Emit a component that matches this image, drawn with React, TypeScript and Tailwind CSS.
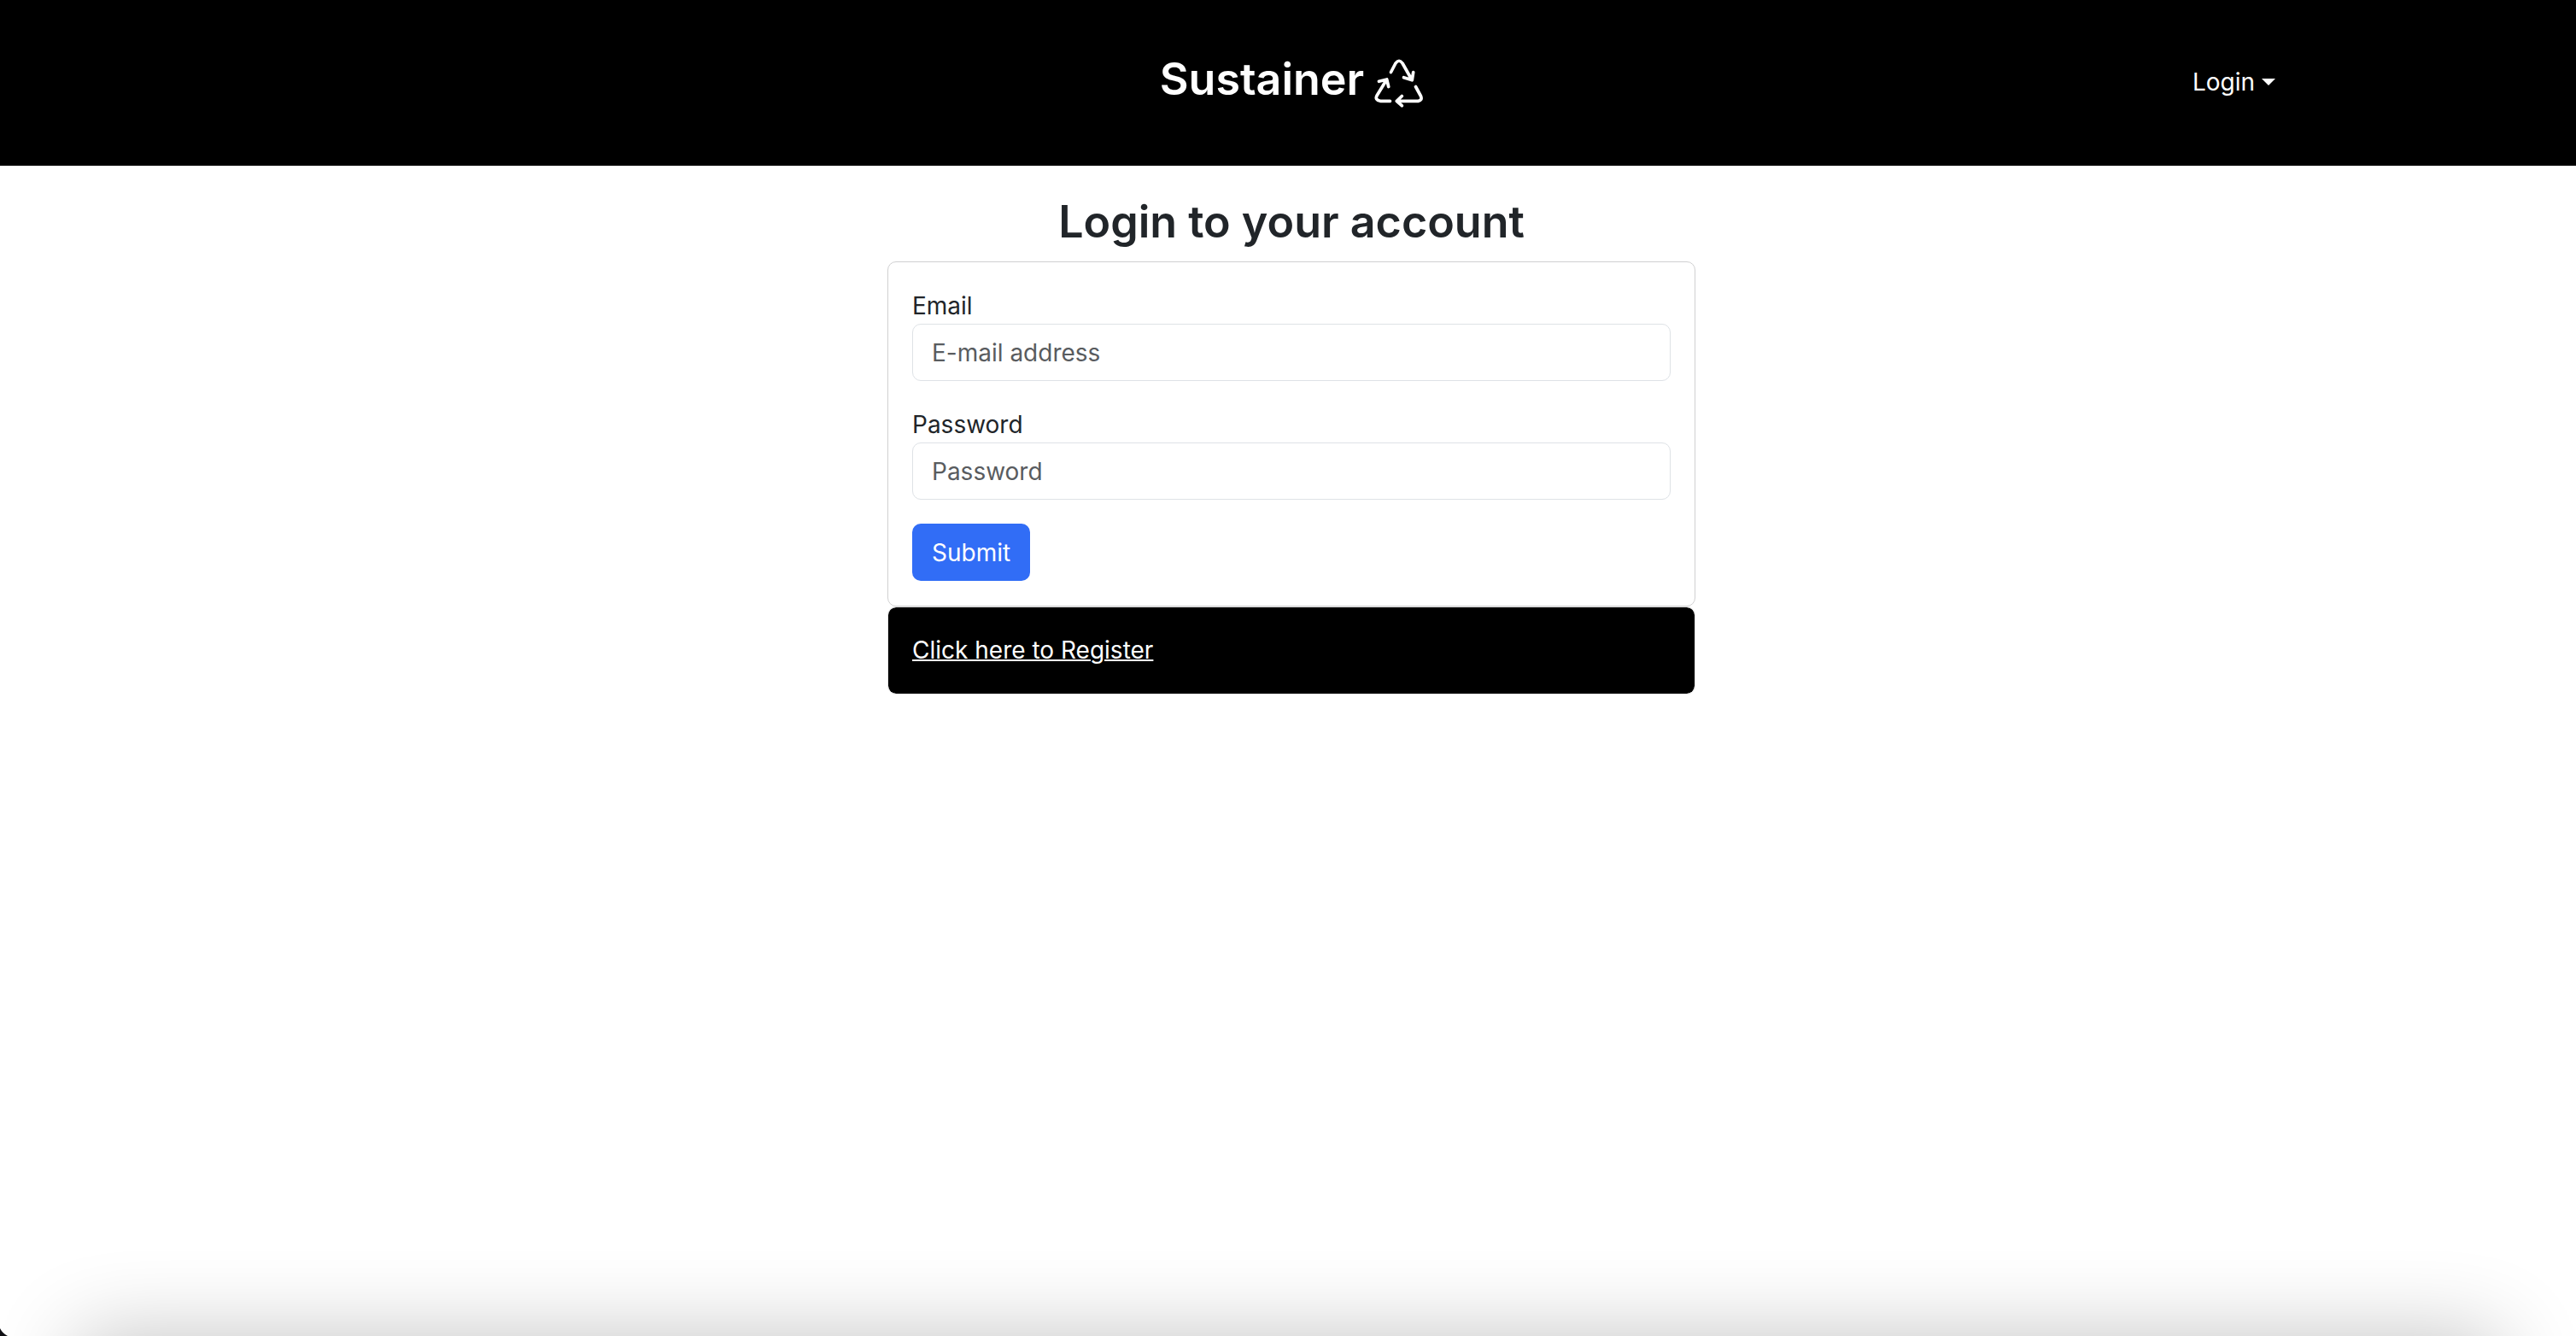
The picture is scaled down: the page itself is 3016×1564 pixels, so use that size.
function RecycleIcon() {
  return (
    <svg
      viewBox="10 14 57 57"
      className="mt-[10px] size-[57px]"
      fill="none"
      stroke="currentColor"
      strokeWidth="3.7"
      strokeLinecap="round"
      strokeLinejoin="round"
      aria-hidden="true"
    >
      <path d="M29.5 29.5 35 19Q39 13.500 43 19L54 38.500M44.500 35.700 54.300 38.800 55.700 29.500" />
      <path d="M28.500 63.300H17Q10.500 62 13 57L24.500 38.300M15.500 40.300 24.700 38 26.700 46.500" />
      <path d="M58.500 46.500 64.500 57.500Q66.500 62.500 61.500 63.300H36.500M42.300 57.500 36.300 63.300 42.300 68.700" />
    </svg>
  );
}

type FieldProps = { id: string; label: string; type: string; placeholder: string };

function Field({ id, label, type, placeholder }: FieldProps) {
  return (
    <div className="mb-7">
      <label htmlFor={id} className="block pt-0.5 leading-[42px]">
        {label}
      </label>
      <input
        id={id}
        type={type}
        placeholder={placeholder}
        className="block h-[67px] w-full rounded-[10px] border border-[#dee2e6] bg-white px-[22px] placeholder:text-[#595c5f]"
      />
    </div>
  );
}

export default function App() {
  return (
    <div className="relative flex min-h-screen flex-col overflow-hidden bg-white font-['Inter',sans-serif] text-[28px] leading-[42px] text-[#212529]">
      <header className="grid h-[194px] grid-cols-[1fr_auto_1fr] items-start bg-black pl-2 text-white">
        <a href="#" className="col-start-2 mt-[59px] flex items-start gap-3 text-[52px] leading-[67px] font-semibold">
          Sustainer
          <RecycleIcon />
        </a>
        <button type="button" className="mt-[75px] mr-[352px] flex items-center gap-2 justify-self-end">
          Login
          <svg viewBox="0 0 16 8" className="h-2 w-4" fill="currentColor" aria-hidden="true">
            <path d="M0 0H16L8 8Z" />
          </svg>
        </button>
      </header>

      <main className="flex flex-col items-center pt-8 pl-2">
        <h1 className="mb-[13px] text-[52px] leading-[67px] font-semibold">Login to your account</h1>
        <div className="w-full max-w-[946px]">
          <form className="rounded-[10px] border border-[#d0d0d1] px-7 pt-7 pb-[29px]">
            <Field id="email" label="Email" type="email" placeholder="E-mail address" />
            <Field id="password" label="Password" type="password" placeholder="Password" />
            <button type="submit" className="block h-[67px] rounded-[10px] bg-[#316df6] px-[23px] text-white">
              Submit
            </button>
          </form>
          <div className="rounded-[10px] border border-[#e4e4e4] bg-black bg-clip-padding p-7 text-white">
            <a href="#" className="block w-fit leading-[45px] underline decoration-2">
              Click here to Register
            </a>
          </div>
        </div>
      </main>

      <div className="pointer-events-none absolute inset-x-[90px] top-full h-40 shadow-[0_0_100px_rgba(0,0,0,0.24)]" />
      <svg viewBox="0 0 9 9" className="absolute bottom-0 left-0 size-[9px]" aria-hidden="true">
        <path d="M0 0Q3 6 9 9H0Z" fill="#101014" />
      </svg>
    </div>
  );
}
